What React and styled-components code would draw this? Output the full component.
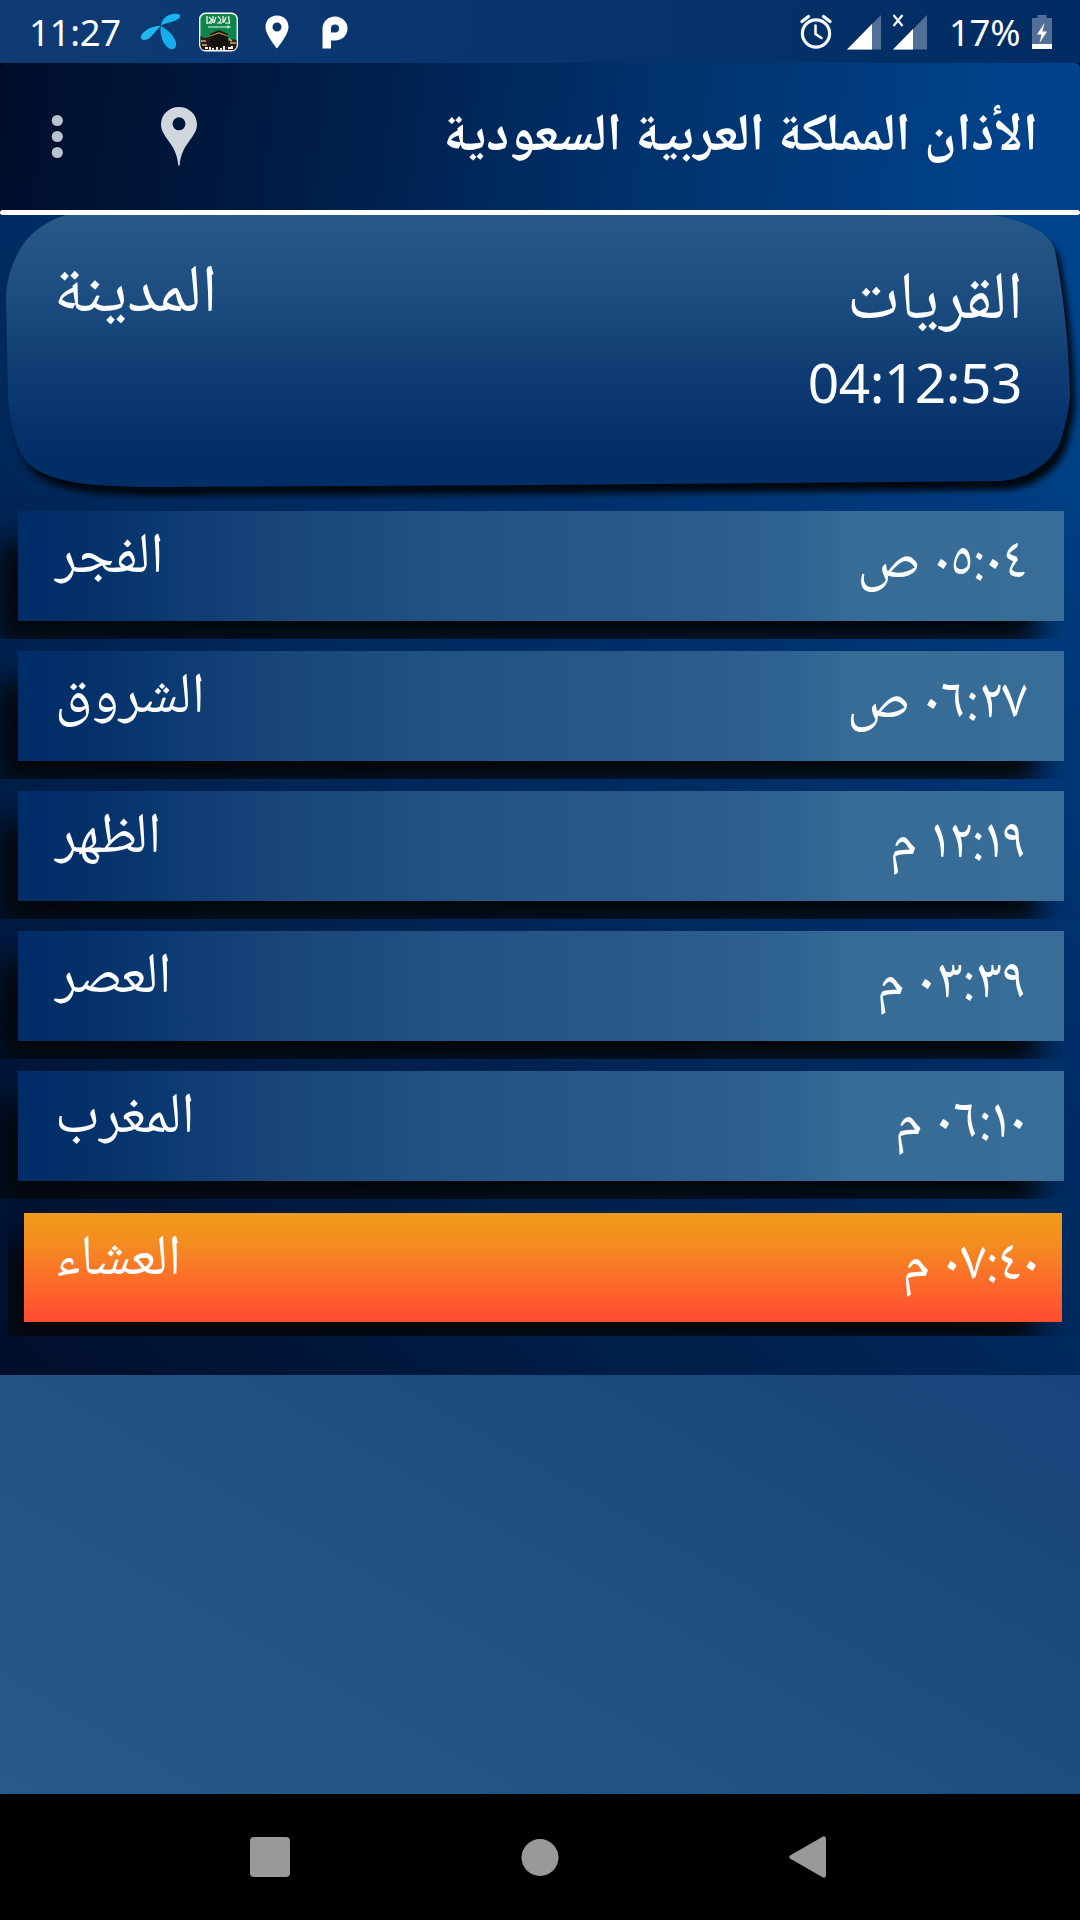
import React from 'react'
import styled, { createGlobalStyle } from 'styled-components'

const GlobalStyle = createGlobalStyle`
  * {
    box-sizing: border-box;
  }
  body {
    margin: 0;
    background: #000;
  }
`

const Screen = styled.div`
  display: flex;
  flex-direction: column;
  width: 1080px;
  height: 1920px;
  overflow: hidden;
  color: #fbfdff;
  font-family: 'Noto Sans', 'Noto Naskh Arabic', 'DejaVu Sans', sans-serif;
`

// Status bar
const StatusBar = styled.div`
  display: flex;
  align-items: center;
  justify-content: space-between;
  flex: none;
  height: 63px;
  padding: 0 28px 0 29px;
  background: linear-gradient(95deg, #0f3b74 0%, #0a366f 40%, #002c63 100%);
`
const StatusGroup = styled.div`
  display: flex;
  align-items: center;
`
const StatusText = styled.span`
  font-size: 36.5px;
  letter-spacing: -0.3px;
  line-height: 63px;
  white-space: nowrap;
  width: ${({ $width }) => $width}px;
  margin-top: 1px;
`
const StatusIcon = styled.svg`
  flex: none;
  width: ${({ $width }) => $width}px;
  height: 40px;
  margin-left: ${({ $gap }) => $gap}px;
  overflow: visible;
`

// Header
const Header = styled.header`
  display: flex;
  align-items: center;
  flex: none;
  height: 147px;
  padding: 0 42px 0 51px;
  border-radius: 5px 5px 0 0;
  background: linear-gradient(98deg, #000d29 0%, #001d48 30%, #00326d 60%, #00438c 95%);
`
const HeaderIcon = styled.svg`
  flex: none;
  width: ${({ $width }) => $width}px;
  height: 60px;
  margin-right: ${({ $gap }) => $gap || 0}px;
  fill: ${({ $color }) => $color};
`
const Title = styled.h1`
  flex: 1;
  margin: 0;
  padding-bottom: 14px;
  font-size: 52.8px;
  line-height: 60px;
  font-weight: 700;
  white-space: nowrap;
`
const Divider = styled.div`
  flex: none;
  height: 5px;
  border-radius: 3px;
  background: #fff;
`

// Panel with the city and the prayer times
const Panel = styled.main`
  display: flex;
  flex-direction: column;
  flex: none;
  height: 1160px;
  background: linear-gradient(42deg, #000e2a 0%, #00285a 45%, #00316d 65%, #00448c 95%);
`
const CityShadow = styled.section`
  flex: none;
  height: 284px;
  overflow: hidden;
`
const CityDrop = styled.div`
  filter: drop-shadow(5px 9px 3px #000912);
`
const CityCard = styled.div`
  display: flex;
  flex-direction: row-reverse;
  justify-content: space-between;
  height: 273px;
  padding: 25px 57px 0 54px;
  background: linear-gradient(180deg, #275987 0%, #1d4d80 30%, #113f74 52%, #0a376f 68%, #012e67 88%, #012e67 100%);
  clip-path: path(
    'M66 0 C44 7 28 19 19 36 C10 53 6 68 6 84 L8 185 C10 205 14 222 19 234 C25 253 47 264 86 269 C110 271 128 272 148 272 L540 270 L1001 266 C1030 264 1054 245 1061 225 C1066 209 1070 190 1070 178 C1069 130 1063 75 1055 36 C1050 15 1020 4 991 0 Z'
  );
`
const CityInfo = styled.div`
  display: flex;
  flex-direction: column;
  align-items: flex-end;
  padding-top: 7px;
`
const CityName = styled.span`
  font-size: 67.5px;
  line-height: 90px;
  height: 90px;
`
const Countdown = styled.span`
  margin: 7px 1px 0 0;
  font-size: 55px;
  letter-spacing: -0.5px;
  line-height: 76px;
`

// Prayer rows
const PrayerSlot = styled.div`
  flex: none;
  height: 140px;
  overflow: hidden;
  padding: 12px 16px 0 18px;
`
const NextSlot = styled(PrayerSlot)`
  height: 137px;
  margin-left: 8px;
  padding: 14px 18px 0 16px;
`
const PrayerBar = styled.div`
  display: flex;
  justify-content: space-between;
  height: 110px;
  padding: 0 37px 0 37px;
  background: linear-gradient(
    90deg,
    #002c67 0%,
    #04306a 6%,
    #0b3971 14%,
    #18467a 25%,
    #205284 41%,
    #275988 58%,
    #2e6291 74%,
    #376c96 80%,
    #386d97 100%
  );
  box-shadow: -24px 28px 28px -2px #04070b;
`
const NextBar = styled(PrayerBar)`
  height: 109px;
  padding: 0 22px 0 31px;
  background: linear-gradient(180deg, #f09c1b 0%, #f48c20 28%, #fd6a2a 65%, #ff4f31 95%);
`
const PrayerName = styled.span`
  font-size: 57px;
  line-height: 78px;
`
const PrayerTime = styled.span`
  font-family: 'Noto Naskh Arabic', 'Noto Sans', 'DejaVu Sans', sans-serif;
  font-size: 57.500px;
  font-variant-numeric: proportional-nums;
  line-height: 107px;
`

const Backdrop = styled.div`
  flex: 1;
  background: linear-gradient(30deg, #275a88 0%, #1f5082 50%, #17447a 100%);
`

// Navigation bar
const NavBar = styled.nav`
  display: flex;
  align-items: center;
  justify-content: space-between;
  flex: none;
  height: 126px;
  padding: 0 254px 0 250px;
  background: #000;
`
const NavIcon = styled.svg`
  width: ${({ $width }) => $width}px;
  height: 42px;
  fill: #999;
`

const prayers = [
  { name: 'الفجر', time: '٠٥:٠٤ ص' },
  { name: 'الشروق', time: '٠٦:٢٧ ص' },
  { name: 'الظهر', time: '١٢:١٩ م' },
  { name: 'العصر', time: '٠٣:٣٩ م' },
  { name: 'المغرب', time: '٠٦:١٠ م' },
  { name: 'العشاء', time: '٠٧:٤٠ م', next: true },
]

const App = () => (
  <Screen>
    <GlobalStyle />
    <StatusBar>
      <StatusGroup>
        <StatusText $width={112}>11:27</StatusText>
        <StatusIcon $width={39} $gap={0} viewBox='0 0 39 40'>
          <path d='M20 14C21 5 29 1 37 2C42 4 37 8 33 9C28 11 23 11 20 14Z' fill='#18b5ef' />
          <path d='M20 14C11 13 2 19 0 24C-1 28 3 29 7 27C12 24 15 18 20 14Z' fill='#1fb9f1' />
          <path d='M20 14C18 21 22 33 28 36.500C34 39 37 34 34 28C31 21 25 17 20 14Z' fill='#14aeea' />
        </StatusIcon>
        <StatusIcon $width={39} $gap={19} viewBox='0 0 39 40'>
          <rect x='0.7' y='1.2' width='37.6' height='37.6' rx='6' fill='#0d8448' stroke='#fff' strokeWidth='1.4' />
          <path d='M8 4v8M10 5l3 3-3 3M14 4v7M17 5l-2 6M19 4l3 4-2 3M24 4v7M27 5l-2 5M30 4c-2 3 2 4 0 8M8 11h5M18 11h5M26 11h4' stroke='#fff' strokeWidth='1.2' fill='none' />
          <path d='M9 15H32M29 13.5v3' stroke='#e9f5ee' strokeWidth='1.2' />
          <path d='M1.5 24L5 26L11 25L12 30H28L32 27L37.5 28V33Q37.5 38 33 38H6Q1.5 38 1.5 33Z' fill='#2b1c17' />
          <path d='M11 22L20 18L29 22V34L20 36L11 34Z' fill='#15110f' />
          <path d='M11 24L20 21L29 24' stroke='#b98a3a' strokeWidth='1.3' fill='none' />
          <path d='M2 29h5M31 31h6M3 33h5M30 27l3 2' stroke='#d9a774' strokeWidth='1.6' />
          <path d='M6 36h3M11 35v3M14 36v2M18 35v3M22 36v2M25 34v4M29 36h3M33 34v3' stroke='#fff' strokeWidth='1.8' />
        </StatusIcon>
        <StatusIcon $width={24} $gap={27} viewBox='0 0 24 40'>
          <path fillRule='evenodd' d='M12 3.500C5 3.500 0.500 8.500 0.500 15C0.500 23 12 36.500 12 36.500S23.500 23 23.500 15C23.500 8.500 19 3.500 12 3.500ZM12 10.500A4.500 4.500 0 1 1 12 19.500A4.500 4.500 0 1 1 12 10.500Z' fill='#fff' />
        </StatusIcon>
        <StatusIcon $width={26} $gap={33} viewBox='0 0 26 40'>
          <path fillRule='evenodd' d='M0.500 36.500V16.500C0.500 9.500 6 4.500 13 4.500S25.500 9.500 25.500 16.500S20 28.500 13 28.500H9V36.500ZM13 12.500A4 4 0 0 0 9 16.500V20.500H13A4 4 0 0 0 13 12.500Z' fill='#fff' />
        </StatusIcon>
      </StatusGroup>
      <StatusGroup>
        <StatusIcon $width={32} $gap={0} viewBox='0 0 32 40' fill='none' stroke='#f4f7fb' strokeLinecap='round'>
          <circle cx='16' cy='21.500' r='13.600' strokeWidth='3.200' />
          <path d='M15.500 13.500V22L21.500 26' strokeWidth='2.600' />
          <path d='M2 9.500L8.500 4.500M30 9.500L23.500 4.500' strokeWidth='3.400' />
        </StatusIcon>
        <StatusIcon $width={34} $gap={15} viewBox='0 0 34 40'>
          <path d='M34 3V37.500H0Z' fill='#526f98' />
          <path d='M25 12V37.500H0Z' fill='#fff' />
        </StatusIcon>
        <StatusIcon $width={34} $gap={12} viewBox='0 0 34 40'>
          <path d='M34 3V37.500H0Z' fill='#526f98' />
          <path d='M20 17V37.500H0Z' fill='#fff' />
          <path d='M0.500 3L9.500 14M9.500 3L0.500 14' stroke='#fff' strokeWidth='2.200' />
        </StatusIcon>
        <StatusIcon $width={0} $gap={22} />
        <StatusText $width={82}>17%</StatusText>
        <StatusIcon $width={20} $gap={1} viewBox='0 0 20 40'>
          <path d='M5.500 3H14.500V6H20V37H0V6H5.500Z' fill='#526f98' />
          <path d='M0 32H20V37H0Z' fill='#fff' />
          <path d='M12.500 11L5 22.500H9.500L7.500 31L15 19.500H10.500Z' fill='#fff' />
        </StatusIcon>
      </StatusGroup>
    </StatusBar>

    <Header>
      <HeaderIcon $width={12} $gap={98} $color='#b9c1cd' viewBox='0 0 12 60'>
        <circle cx='6.300' cy='13.500' r='5.600' />
        <circle cx='6.300' cy='29.500' r='5.600' />
        <circle cx='6.300' cy='45.500' r='5.600' />
      </HeaderIcon>
      <HeaderIcon $width={36} $color='#d1d7df' viewBox='0 0 36 60'>
        <path fillRule='evenodd' d='M18 0C8 0 0 7.500 0 17.500C0 30.500 16 36.500 17.300 58.500H18.700C20 36.500 36 30.500 36 17.500C36 7.500 28 0 18 0ZM18 10.300A6.500 6.500 0 1 1 18 23.300A6.500 6.500 0 1 1 18 10.300Z' />
      </HeaderIcon>
      <Title dir='rtl'>الأذان المملكة العربية السعودية</Title>
    </Header>
    <Divider />

    <Panel>
      <CityShadow>
        <CityDrop>
          <CityCard>
            <CityInfo>
              <CityName dir='rtl'>القريات</CityName>
              <Countdown>04:12:53</Countdown>
            </CityInfo>
            <CityName dir='rtl'>المدينة</CityName>
          </CityCard>
        </CityDrop>
      </CityShadow>
      {prayers.map(({ name, time, next }) => {
        const Slot = next ? NextSlot : PrayerSlot
        const Bar = next ? NextBar : PrayerBar
        return (
          <Slot key={name}>
            <Bar>
              <PrayerName dir='rtl'>{name}</PrayerName>
              <PrayerTime dir='rtl'>{time}</PrayerTime>
            </Bar>
          </Slot>
        )
      })}
    </Panel>
    <Backdrop />

    <NavBar>
      <NavIcon $width={40} viewBox='0 0 40 42'>
        <rect x='0' y='1' width='40' height='40' rx='4' />
      </NavIcon>
      <NavIcon $width={38} viewBox='0 0 38 42'>
        <circle cx='19' cy='21.500' r='18.500' />
      </NavIcon>
      <NavIcon $width={37} viewBox='0 0 37 42'>
        <path d='M34 0.500Q37 -0.500 37 3V39Q37 42.500 34 41.500L1 22.500Q-0.500 21 1 19.500Z' />
      </NavIcon>
    </NavBar>
  </Screen>
)

export default App
